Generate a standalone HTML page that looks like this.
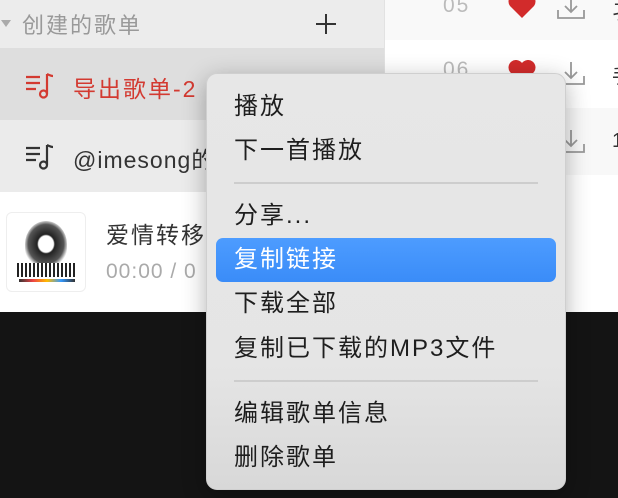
<!DOCTYPE html>
<html><head><meta charset="utf-8"><style>
*{margin:0;padding:0;box-sizing:border-box}
body{width:618px;height:498px;overflow:hidden;background:#141414;position:relative;font-family:"Liberation Sans","Noto Sans CJK SC",sans-serif}
.a{position:absolute}
.t{position:absolute;white-space:nowrap;letter-spacing:2px}
.mi{position:absolute;left:234px;font-size:24px;color:#1e1e1e;line-height:30px;white-space:nowrap;letter-spacing:2px}
</style></head><body>
<div class="a" style="left:0;top:0;width:385px;height:48px;background:#ececec"></div>
<div class="a" style="left:0;top:48px;width:385px;height:72px;background:#dedede"></div>
<div class="a" style="left:0;top:120px;width:385px;height:72px;background:#ebebeb"></div>
<div class="a" style="left:0;top:192px;width:618px;height:120px;background:#fff"></div>
<div class="a" style="left:385px;top:0;width:233px;height:40px;background:#f9f9f9"></div>
<div class="a" style="left:385px;top:40px;width:233px;height:68px;background:#fff"></div>
<div class="a" style="left:385px;top:108px;width:233px;height:67px;background:#f8f8f8"></div>
<div class="a" style="left:385px;top:175px;width:233px;height:17px;background:#fff"></div>
<div class="a" style="left:384px;top:0;width:1px;height:192px;background:#e2e2e2"></div>

<svg class="a" style="left:0;top:18px" width="12" height="12"><path d="M1 2h10l-5 7z" fill="#aaa"/></svg>
<div class="t" style="left:22px;top:8px;font-size:22px;color:#999">创建的歌单</div>
<svg class="a" style="left:314px;top:12px" width="24" height="24"><path d="M12 2v20M2 12h20" stroke="#333" stroke-width="2"/></svg>

<svg class="a" style="left:25px;top:72px" width="30" height="28"><path d="M1 5h14M1 11h14M1 17h10" stroke="#d33a31" stroke-width="2.2" fill="none"/><path d="M22 2v20M22 2q4 2 6 2" stroke="#d33a31" stroke-width="2.2" fill="none"/><circle cx="18.5" cy="22" r="3.5" stroke="#d33a31" stroke-width="2.2" fill="none"/></svg>
<div class="t" style="left:73px;top:70px;font-size:23px;color:#d33a31">导出歌单-2</div>

<svg class="a" style="left:25px;top:143px" width="30" height="28"><path d="M1 5h14M1 11h14M1 17h10" stroke="#333" stroke-width="2.2" fill="none"/><path d="M22 2v20M22 2q4 2 6 2" stroke="#333" stroke-width="2.2" fill="none"/><circle cx="18.5" cy="22" r="3.5" stroke="#333" stroke-width="2.2" fill="none"/></svg>
<div class="t" style="left:73px;top:141px;font-size:23px;color:#333;letter-spacing:1px">@imesong的</div>

<div class="a" style="left:6px;top:212px;width:80px;height:80px;border:1px solid #eee;border-radius:6px;background:#fff;overflow:hidden">
<div class="a" style="left:18px;top:8px;width:42px;height:46px;border-radius:50% 50% 40% 40%;background:radial-gradient(#fff 25%,#222 30%,#555 60%,#fff 75%)"></div>
<div class="a" style="left:10px;top:50px;width:60px;height:14px;background:repeating-linear-gradient(90deg,#222 0 2px,#fff 2px 4px)"></div>
<div class="a" style="left:12px;top:66px;width:56px;height:3px;background:linear-gradient(90deg,#333,#e44,#fb0,#39f,#333)"></div>
</div>
<div class="t" style="left:106px;top:216px;font-size:23px;color:#333">爱情转移</div>
<div class="t" style="left:106px;top:260px;font-size:21px;color:#aaa;letter-spacing:1px">00:00 / 0</div>

<div class="t" style="left:443px;top:-6px;font-size:21px;color:#bbb">05</div>
<div class="t" style="left:443px;top:58px;font-size:21px;color:#bbb">06</div>
<svg class="a" style="left:507px;top:-6px" width="30" height="26"><path d="M15 24L3 12A7 7 0 0 1 15 3A7 7 0 0 1 27 12z" fill="#d22b2b"/></svg>
<svg class="a" style="left:507px;top:60px" width="30" height="26"><path d="M15 24L3 12A7 7 0 0 1 15 3A7 7 0 0 1 27 12z" fill="#d22b2b"/></svg>
<svg class="a" style="left:555px;top:-6px" width="32" height="28"><path d="M16 2v16M10 12l6 6 6-6M3 16v8h26v-8" stroke="#999" stroke-width="1.8" fill="none"/></svg>
<svg class="a" style="left:555px;top:60px" width="32" height="28"><path d="M16 2v16M10 12l6 6 6-6M3 16v8h26v-8" stroke="#999" stroke-width="1.8" fill="none"/></svg>
<svg class="a" style="left:555px;top:128px" width="32" height="28"><path d="M16 2v16M10 12l6 6 6-6M3 16v8h26v-8" stroke="#999" stroke-width="1.8" fill="none"/></svg>
<div class="t" style="left:612px;top:-4px;font-size:20px;color:#333">孑</div>
<div class="t" style="left:612px;top:60px;font-size:20px;color:#333">手</div>
<div class="t" style="left:612px;top:130px;font-size:20px;color:#333">1</div>

<div class="a" style="left:206px;top:73px;width:360px;height:417px;border-radius:11px;background:linear-gradient(#e7e7e7 0%,#e5e5e5 70%,#d8d8d8 100%);border:1px solid #cfcfcf;box-shadow:0 6px 24px rgba(0,0,0,.3)"></div>
<div class="a" style="left:234px;top:182px;width:304px;height:2px;background:#cdcdcd"></div>
<div class="a" style="left:234px;top:380px;width:304px;height:2px;background:#cdcdcd"></div>
<div class="a" style="left:216px;top:238px;width:340px;height:44px;border-radius:7px;background:linear-gradient(#4d9cff,#3a8cf8)"></div>
<div class="mi" style="top:92px">播放</div>
<div class="mi" style="top:136px">下一首播放</div>
<div class="mi" style="top:201px">分享...</div>
<div class="mi" style="top:245px;color:#fff">复制链接</div>
<div class="mi" style="top:289px">下载全部</div>
<div class="mi" style="top:334px">复制已下载的MP3文件</div>
<div class="mi" style="top:399px">编辑歌单信息</div>
<div class="mi" style="top:443px">删除歌单</div>
</body></html>
